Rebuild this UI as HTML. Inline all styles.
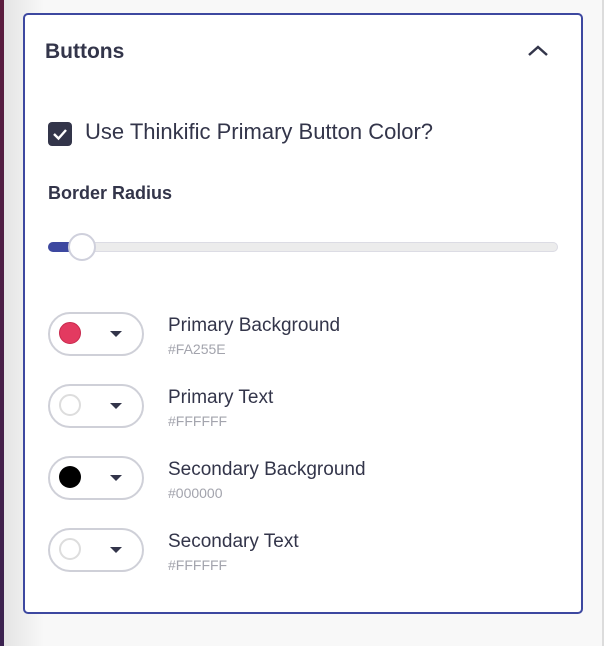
<!DOCTYPE html><html><head><style>
body{margin:0;width:610px;height:646px;overflow:hidden;background:#f8f8f8;font-family:"Liberation Sans",sans-serif;position:relative}
.strip{position:absolute;left:0;top:0;width:4px;height:646px;background:linear-gradient(#5b1c3e,#3b2250)}
.shade{position:absolute;left:4px;top:0;width:40px;height:646px;background:linear-gradient(90deg,#e4e4e4,#f8f8f8)}
.rline{position:absolute;left:602px;top:0;width:2px;height:646px;background:#dcdcdc}
.rbg{position:absolute;left:604px;top:0;width:6px;height:646px;background:#fff}
.card{position:absolute;left:23px;top:13px;width:556px;height:597px;border:2px solid #3d48a0;border-radius:5px;background:#fff}
.t{position:absolute;color:#33354a}
.pill{position:absolute;left:48px;width:92px;height:40px;border:2px solid #cfd0d8;border-radius:22px;background:#fff}
.dot{position:absolute;left:9px;top:8px;width:22px;height:22px;border-radius:50%;box-sizing:border-box}
.arr{position:absolute;left:60px;top:17px;width:0;height:0;border-left:6px solid transparent;border-right:6px solid transparent;border-top:6px solid #33354a}
.lab{position:absolute;left:168px;font-size:19px;color:#33354a}
.hex{position:absolute;left:168px;font-size:14px;color:#a3a4ad}
</style></head><body>
<div class="strip"></div><div class="shade"></div><div class="rline"></div><div class="rbg"></div>
<div class="card"></div>
<div class="t" style="left:45px;top:40px;font-size:21px;font-weight:bold">Buttons</div>
<svg style="position:absolute;left:527px;top:44px" width="22" height="14"><path d="M2 11 L11 3 L20 11" fill="none" stroke="#33354a" stroke-width="2.5"/></svg>
<div style="position:absolute;left:48px;top:122px;width:24px;height:24px;border-radius:4px;background:#33354a"></div>
<svg style="position:absolute;left:48px;top:122px" width="24" height="24"><path d="M6 12 L10.5 16.5 L18 8" fill="none" stroke="#fff" stroke-width="2.4"/></svg>
<div class="t" style="left:85px;top:119px;font-size:22px">Use Thinkific Primary Button Color?</div>
<div class="t" style="left:48px;top:183px;font-size:18px;font-weight:bold">Border Radius</div>
<div style="position:absolute;left:48px;top:242px;width:510px;height:10px;border-radius:5px;background:#ececec;box-shadow:inset 0 0 0 1px #dcdce4"></div>
<div style="position:absolute;left:48px;top:242px;width:34px;height:10px;border-radius:5px;background:#3d48a0"></div>
<div style="position:absolute;left:68px;top:233px;width:24px;height:24px;border-radius:50%;background:#fff;border:2px solid #cfd0dc"></div>

<div class="pill" style="top:312px"><div class="dot" style="background:#e33a60;border:1px solid #c8284c"></div><div class="arr"></div></div>
<div class="lab" style="top:315px">Primary Background</div><div class="hex" style="top:341px">#FA255E</div>
<div class="pill" style="top:384px"><div class="dot" style="background:#fff;border:2px solid #ddd"></div><div class="arr"></div></div>
<div class="lab" style="top:387px">Primary Text</div><div class="hex" style="top:413px">#FFFFFF</div>
<div class="pill" style="top:456px"><div class="dot" style="background:#000"></div><div class="arr"></div></div>
<div class="lab" style="top:459px">Secondary Background</div><div class="hex" style="top:485px">#000000</div>
<div class="pill" style="top:528px"><div class="dot" style="background:#fff;border:2px solid #ddd"></div><div class="arr"></div></div>
<div class="lab" style="top:531px">Secondary Text</div><div class="hex" style="top:557px">#FFFFFF</div>
</body></html>
